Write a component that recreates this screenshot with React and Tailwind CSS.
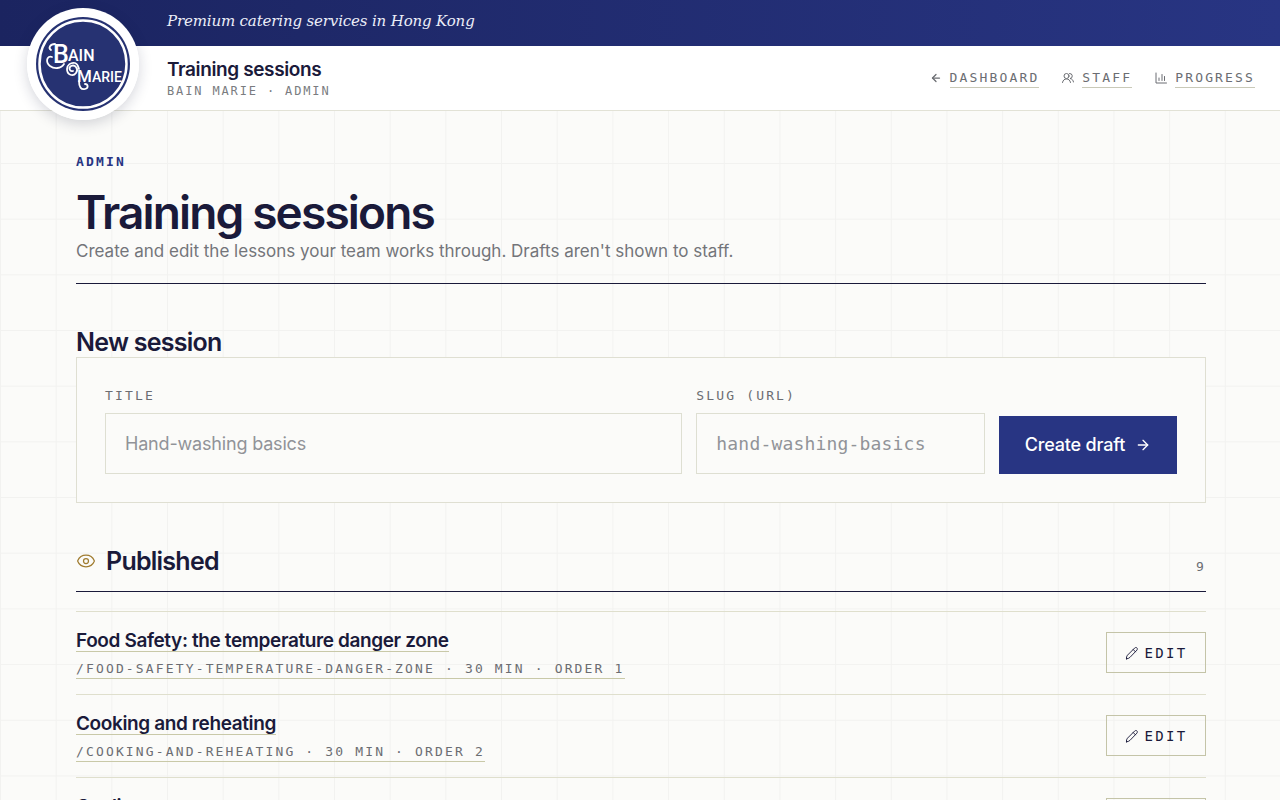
import React, { useState } from "react";
import { ArrowLeft, ArrowRight, Eye } from "lucide-react";

const sessions = [
  { title: "Food Safety: the temperature danger zone", slug: "food-safety-temperature-danger-zone", minutes: 30, order: 1 },
  { title: "Cooking and reheating", slug: "cooking-and-reheating", minutes: 30, order: 2 },
  { title: "Cooling", slug: "cooling", minutes: 30, order: 3 },
];

const mono = "font-['DejaVu_Sans_Mono',monospace]";

function Logo() {
  return (
    <svg viewBox="0 0 112 112" className="size-28" role="img" aria-label="Bain Marie">
      <circle cx="56" cy="56" r="56" fill="#fff" />
      <circle cx="56" cy="56" r="47" fill="#263272" />
      <circle cx="56" cy="56" r="43.500" fill="none" stroke="#fff" strokeWidth="2.5" />
      {/* swashes around the B and the M */}
      <g fill="none" stroke="#fff" strokeWidth="1.8" strokeLinecap="round">
        <path d="M28 36c-5 0-7 4-4 6M25 49c-5-2-7 5-2 9 4 3 11 3 14-2" />
        <path d="M46 63c-3 1-5-3-2-5 4-2 8 3 5 7-3 4-9 2-9-4 0-4 4-7 8-6 3 1 3 3 4 6" />
        <path d="M52 73c0 6 2 9 6 8 4-1 3-5 0-5" />
      </g>
      <g fill="#fff" className="font-['Roboto',sans-serif] font-medium">
        <text x="26" y="55" fontSize="25">B</text>
        <text x="41" y="53" fontSize="16">AIN</text>
        <text x="50" y="74" fontSize="17">M</text>
        <text x="65" y="74" fontSize="14">ARIE</text>
      </g>
    </svg>
  );
}

function UsersIcon() {
  return (
    <svg viewBox="0 0 24 24" className="size-3" fill="none" stroke="currentColor" strokeWidth="2" strokeLinecap="round" strokeLinejoin="round" aria-hidden="true">
      <circle cx="9" cy="8" r="5" />
      <path d="M1 21c1-5 4-7 8-7s7 2 8 7" />
      <path d="M15 3a5 5 0 1 1 1 10c4 .5 6 3 7 7" />
    </svg>
  );
}

function ChartIcon() {
  return (
    <svg viewBox="0 0 24 24" className="size-3" fill="none" stroke="currentColor" strokeWidth="2" strokeLinecap="round" strokeLinejoin="round" aria-hidden="true">
      <path d="M2 2v20h21M8 12v5M14 5v12M19 9v8" />
    </svg>
  );
}

function PencilIcon() {
  return (
    <svg viewBox="0 0 24 24" className="size-3.5" fill="none" stroke="currentColor" strokeWidth="1.6" strokeLinecap="round" strokeLinejoin="round" aria-hidden="true">
      <path d="M2.500 22c-.5-2 .5-5 2-6.500L16.500 3.500c3-2.500 6 .5 4 3.500L8.500 19.500c-1.500 1.500-4 2.500-6 2.500zM14 6l4 4" />
    </svg>
  );
}

function NavLink({ icon, children }) {
  return (
    <a href="#" className="flex items-center gap-2 text-[#6b6d72]">
      {icon}
      <span className={`${mono} border-b border-[#c9c9b8] text-[13px] leading-[18px] tracking-[0.165em] uppercase`}>
        {children}
      </span>
    </a>
  );
}

function SessionRow({ session }) {
  return (
    <li className="flex items-start justify-between border-b border-[#dfdfcd]">
      <a href="#" className="flex flex-col items-start gap-2 pt-[18px] pb-[15px]">
        <span className="border-b border-[#c9c9a8] text-[19px] leading-[21px] font-semibold tracking-[-0.02em]">
          {session.title}
        </span>
        <span className={`${mono} border-b border-[#c9c9a8] text-[13px] leading-[18px] tracking-[0.165em] text-[#6b6d72] uppercase`}>
          /{session.slug} · {session.minutes} min · order {session.order}
        </span>
      </a>
      <button type="button" className={`${mono} mt-5 flex h-[41px] w-[100px] items-center justify-center gap-1.5 border border-[#c4c4a8] text-sm tracking-[0.165em] uppercase`}>
        <PencilIcon />
        Edit
      </button>
    </li>
  );
}

export default function App() {
  const [title, setTitle] = useState("");
  const [slug, setSlug] = useState("");

  return (
    <div className="min-h-screen bg-[#fbfbf9] bg-[linear-gradient(to_right,#f2f2f0_1px,transparent_1px),linear-gradient(to_bottom,#f2f2f0_1px,transparent_1px)] bg-[size:4.35vw_4.35vw] bg-[position:0_-4px] font-['Inter',sans-serif] text-[#1a1a3a]">
      <header className="relative">
        <div className="h-[46px] bg-linear-to-r from-[#1b2460] to-[#283583] pt-[9px] pl-[167px]">
          <p className="font-['DejaVu_Serif',serif] text-[15px] leading-6 tracking-[-0.01em] text-[#eceef8] italic">
            Premium catering services in Hong Kong
          </p>
        </div>
        <div className="flex h-[65px] items-center justify-between border-b border-[#e2e2d6] bg-white pr-[25px] pl-[167px]">
          <div>
            <p className="text-[19px] leading-[26px] font-semibold tracking-[-0.02em]">Training sessions</p>
            <p className={`${mono} text-xs leading-4 tracking-[0.155em] text-[#7a7c80] uppercase`}>Bain Marie · Admin</p>
          </div>
          <nav className="flex items-center gap-[23px]">
            <NavLink icon={<ArrowLeft size={12} strokeWidth={2.5} />}>Dashboard</NavLink>
            <NavLink icon={<UsersIcon />}>Staff</NavLink>
            <NavLink icon={<ChartIcon />}>Progress</NavLink>
          </nav>
        </div>
        {/* Logo badge hangs over both bars */}
        <a href="#" className="absolute top-2 left-[27px] rounded-full shadow-[0_4px_14px_rgba(20,25,60,0.18)]">
          <Logo />
        </a>
      </header>

      <main className="pt-[42px] pr-[74px] pl-[76px]">
        <p className={`${mono} text-[13px] leading-[18px] font-bold tracking-[0.165em] text-[#283583] uppercase`}>Admin</p>
        <h1 className="mt-3.5 text-[46px] leading-[54px] font-semibold tracking-[-0.04em]">Training sessions</h1>
        <p className="text-[17px] leading-6 text-[#73757a]">
          Create and edit the lessons your team works through. Drafts aren't shown to staff.
        </p>
        <hr className="mt-5 border-[#1a1a3a]" />

        <h2 className="mt-11 text-[25px] leading-[29px] font-semibold tracking-[-0.03em]">New session</h2>
        <form onSubmit={(e) => e.preventDefault()} className="flex items-end gap-3.5 border border-[#dfdfd2] bg-[#fbfbf9] p-7">
          <div className="flex flex-2 flex-col gap-[7px]">
            <label htmlFor="title" className={`${mono} text-[13px] leading-5 tracking-[0.165em] text-[#6b6d72] uppercase`}>Title</label>
            <input
              id="title"
              value={title}
              onChange={(e) => setTitle(e.target.value)}
              placeholder="Hand-washing basics"
              className="h-[61px] w-full border border-[#dedfd2] px-[19px] text-lg tracking-[-0.01em] outline-none placeholder:text-[#919398]"
            />
          </div>
          <div className="flex flex-1 flex-col gap-[7px]">
            <label htmlFor="slug" className={`${mono} text-[13px] leading-5 tracking-[0.165em] text-[#6b6d72] uppercase`}>Slug (URL)</label>
            <input
              id="slug"
              value={slug}
              onChange={(e) => setSlug(e.target.value)}
              placeholder="hand-washing-basics"
              className={`${mono} h-[61px] w-full border border-[#dedfd2] px-[19px] text-lg tracking-[0.01em] outline-none placeholder:text-[#919398]`}
            />
          </div>
          <button type="submit" className="flex h-[58px] w-[178px] items-center justify-center gap-2.5 bg-[#283583] text-lg font-medium tracking-[-0.01em] text-white">
            Create draft
            <ArrowRight size={16} strokeWidth={2} />
          </button>
        </form>

        <section className="mt-11">
          <div className="flex items-end justify-between border-b border-[#1a1a3a] pb-4">
            <h2 className="flex items-center gap-2.5 text-[25px] leading-7 font-semibold tracking-[-0.03em]">
              <Eye size={20} strokeWidth={1.5} className="text-[#a07c30]" />
              Published
            </h2>
            <span className={`${mono} text-[13px] leading-4 tracking-[0.165em] text-[#6b6d72]`}>9</span>
          </div>
          <ul className="mt-[19px] border-t border-[#dfdfcd]">
            {sessions.map((session) => (
              <SessionRow key={session.slug} session={session} />
            ))}
          </ul>
        </section>
      </main>
    </div>
  );
}
